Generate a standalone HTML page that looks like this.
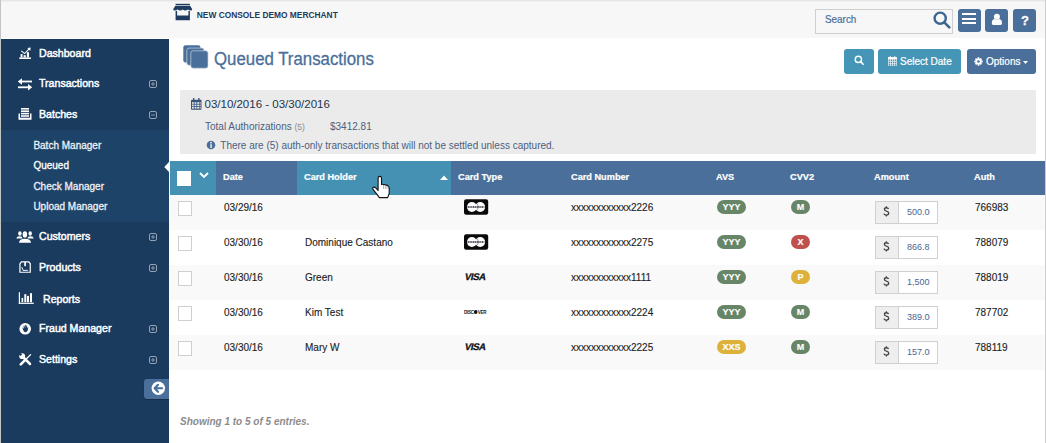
<!DOCTYPE html>
<html><head><meta charset="utf-8">
<style>
*{box-sizing:border-box;margin:0;padding:0}
html,body{width:1046px;height:443px;overflow:hidden;background:#fff;font-family:"Liberation Sans",sans-serif}
.a{position:absolute}
.t{position:absolute;white-space:nowrap;line-height:1}
#hdr{left:0;top:0;width:1046px;height:38px;background:#f7f7f7}
#side{left:1px;top:39px;width:168px;height:404px;background:#1a3a5e}
#sub{left:1px;top:130px;width:168px;height:92px;background:#1e4368}
.nav{color:#fff;font-size:10.6px;-webkit-text-stroke:0.45px #fff}
.subi{color:#eef1f5;font-size:10px;-webkit-text-stroke:0.3px #eef1f5}
.pm{position:absolute;left:149px;width:8px;height:8px}
.pm svg{display:block}
.btn{position:absolute;border-radius:3px}
.th{position:absolute;top:161px;height:34px}
.thl{color:#fff;font-weight:bold;font-size:9.2px;top:172.6px;-webkit-text-stroke:0.2px #fff}
.row{position:absolute;left:169px;width:876px;height:35px}
.cb{position:absolute;left:178px;width:14px;height:15px;background:#fff;border:1px solid #cfcfcf}
.td{color:#222;font-size:10px;-webkit-text-stroke:0.12px #222}
.badge{position:absolute;height:14px;border-radius:7px;color:#fff;font-weight:bold;font-size:9px;text-align:center;line-height:14px;-webkit-text-stroke:0.15px #fff}
.grn{background:#678567}
.red{background:#c0504d}
.yel{background:#deb23a}
.amt{position:absolute;left:875px;width:63px;height:23px}
.amt .ad{position:absolute;left:0;top:0;width:24px;height:23px;background:#eeeeee;border:1px solid #d0d0d0;color:#444;font-size:13px;text-align:center;line-height:21px;-webkit-text-stroke:0.2px #444}
.amt .in{position:absolute;left:23px;top:0;width:40px;height:23px;background:#fff;border:1px solid #d0d0d0;color:#4a6690;font-size:9px;line-height:21px}
.amt .in span{position:absolute;left:8px;top:0;width:23px;overflow:hidden;white-space:nowrap}
</style></head><body>
<!-- borders -->
<div class="a" style="left:0;top:0;width:1046px;height:1px;background:#e4e4e4"></div>
<div class="a" id="hdr"></div>
<div class="a" style="left:0;top:0;width:1046px;height:1px;background:#e6e6e6"></div>
<div class="a" style="left:0;top:1px;width:1046px;height:1px;background:#f0f0f0"></div>

<!-- header logo -->
<svg class="a" style="left:173px;top:3px" width="20" height="18" viewBox="0 0 20 18" fill="#1e3c60">
 <rect x="2.6" y="0.8" width="14.3" height="1.3"/>
 <path d="M2.4 2.8 H17.1 L19.2 6.2 Q19.2 7.5 17.8 7.5 Q16.3 7.5 14.9 6.6 Q13.5 7.5 12.1 7.5 Q10.7 7.5 9.7 6.6 Q8.6 7.5 7.3 7.5 Q5.9 7.5 4.6 6.6 Q3.3 7.5 1.6 7.5 Q0.2 7.5 0.2 6.2 Z"/>
 <path d="M2.6 8 H4.1 V12.4 H15.4 V8 H16.9 V17.3 H2.6 Z"/>
</svg>
<div class="t" style="left:196.8px;top:11px;font-size:8.4px;font-weight:bold;color:#1f3a5c">NEW CONSOLE DEMO MERCHANT</div>

<!-- search -->
<div class="a" style="left:815px;top:9px;width:138px;height:25px;border:1px solid #cfcfcf;background:#f7f7f7"></div>
<div class="t" style="left:825px;top:15.2px;font-size:10.3px;color:#4a6f9a;-webkit-text-stroke:0.2px #4a6f9a;transform:scaleX(0.96);transform-origin:0 0">Search</div>
<svg class="a" style="left:933px;top:11px" width="18" height="18" viewBox="0 0 18 18">
 <circle cx="7.2" cy="7.2" r="5.6" fill="none" stroke="#3d6591" stroke-width="2.4"/>
 <line x1="11.3" y1="11.3" x2="16.3" y2="16.3" stroke="#3d6591" stroke-width="2.6" stroke-linecap="round"/>
</svg>
<div class="btn" style="left:958px;top:9px;width:23px;height:23px;background:#4a6f9a"></div>
<div class="a" style="left:962px;top:13px;width:14px;height:2px;background:#fff"></div>
<div class="a" style="left:962px;top:17.5px;width:14px;height:2px;background:#fff"></div>
<div class="a" style="left:962px;top:22px;width:14px;height:2px;background:#fff"></div>
<div class="btn" style="left:985px;top:9px;width:23px;height:23px;background:#4a6f9a"></div>
<svg class="a" style="left:985px;top:9px" width="23" height="23" viewBox="0 0 23 23">
 <circle cx="11.9" cy="7.7" r="3" fill="#fff"/>
 <path d="M6.8 14.2 Q6.8 10.6 9.5 10 Q11.9 11.4 14.3 10 Q17 10.6 17 14.2 Q17 16 15.6 16 H8.2 Q6.8 16 6.8 14.2 Z" fill="#fff"/>
</svg>
<div class="btn" style="left:1013px;top:9px;width:23px;height:23px;background:#4a6f9a"></div>
<div class="t" style="left:1021px;top:13.5px;font-size:13px;font-weight:bold;color:#fff;-webkit-text-stroke:0.3px #fff">?</div>

<!-- sidebar -->
<div class="a" id="side"></div>
<div class="a" id="sub"></div>
<div class="a" style="left:0;top:0;width:1px;height:443px;background:#c4c4c4"></div>
<div class="a" style="left:1045px;top:0;width:1px;height:443px;background:#cdcdcd"></div>

<!-- nav icons -->
<svg class="a" style="left:19px;top:47px" width="13" height="13" viewBox="0 0 13 13" fill="#fff">
 <rect x="0.3" y="10.4" width="11.6" height="1.6"/>
 <rect x="1.6" y="7" width="1.9" height="3.4"/><rect x="4.6" y="8.2" width="2.2" height="2.2"/><rect x="7.9" y="5.2" width="2.1" height="5.2"/>
 <path d="M2.3 3.8 L5.6 6.6 L10 2.2" stroke="#fff" stroke-width="1.1" fill="none"/>
 <path d="M8.3 0.9 L11.6 0.6 L11.3 3.9 Z"/>
</svg>
<div class="t nav" style="left:39px;top:48px">Dashboard</div>

<svg class="a" style="left:17px;top:78px" width="16" height="13" viewBox="0 0 16 13" fill="#fff">
 <rect x="4" y="2.6" width="11" height="1.8"/><path d="M0.8 3.5 L5 0.3 L5 6.7 Z"/>
 <rect x="1" y="8.4" width="11" height="1.8"/><path d="M15.2 9.3 L11 6.1 L11 12.5 Z"/>
</svg>
<div class="t nav" style="left:39px;top:78px">Transactions</div>
<div class="pm" style="top:80px"><svg width="8" height="8" viewBox="0 0 8 8"><rect x="0.5" y="0.5" width="7" height="7" rx="1.5" fill="none" stroke="#95a3b5" stroke-width="1"/><path d="M2 4 H6" stroke="#95a3b5" stroke-width="0.9"/><path d="M4 2 V6" stroke="#95a3b5" stroke-width="0.9"/></svg></div>

<svg class="a" style="left:18px;top:107px" width="14" height="14" viewBox="0 0 14 14" fill="#fff">
 <rect x="3" y="1" width="8" height="1.6"/><rect x="3" y="3.4" width="8" height="1.6"/><rect x="3" y="5.8" width="8" height="1.6"/><rect x="3" y="8.2" width="8" height="1.6"/>
 <path d="M0.5 6.5 H2 V10.8 H12 V6.5 H13.5 V12.8 H0.5 Z"/>
</svg>
<div class="t nav" style="left:39px;top:109px">Batches</div>
<div class="pm" style="top:111px"><svg width="8" height="8" viewBox="0 0 8 8"><rect x="0.5" y="0.5" width="7" height="7" rx="1.5" fill="none" stroke="#95a3b5" stroke-width="1"/><path d="M2 4 H6" stroke="#95a3b5" stroke-width="0.9"/></svg></div>

<div class="t subi" style="left:33.4px;top:141px">Batch Manager</div>
<div class="t subi" style="left:33.4px;top:161px;color:#fff;-webkit-text-stroke:0.3px #fff">Queued</div>
<div class="t subi" style="left:33.4px;top:181.6px">Check Manager</div>
<div class="t subi" style="left:33.4px;top:201.8px">Upload Manager</div>
<svg class="a" style="left:164px;top:162px" width="5" height="10" viewBox="0 0 5 10"><path d="M5 0 L0.3 5 L5 10 Z" fill="#fff"/></svg>

<svg class="a" style="left:16px;top:230px" width="18" height="13" viewBox="0 0 18 13" fill="#fff">
 <ellipse cx="3.9" cy="3.5" rx="1.7" ry="2.2"/><ellipse cx="14.2" cy="3.5" rx="1.7" ry="2.2"/>
 <path d="M0.3 8.4 Q0.6 6.2 3.5 6.2 Q6.3 6.2 6.6 8.4 Z"/><path d="M11.4 8.4 Q11.7 6.2 14.5 6.2 Q17.4 6.2 17.7 8.4 Z"/>
 <ellipse cx="8.9" cy="4.4" rx="2.2" ry="3.2"/>
 <path d="M3 12.7 Q3.2 8.8 9 8.8 Q14.8 8.8 15 12.7 Z"/>
</svg>
<div class="t nav" style="left:39px;top:231px">Customers</div>
<div class="pm" style="top:233px"><svg width="8" height="8" viewBox="0 0 8 8"><rect x="0.5" y="0.5" width="7" height="7" rx="1.5" fill="none" stroke="#95a3b5" stroke-width="1"/><path d="M2 4 H6" stroke="#95a3b5" stroke-width="0.9"/><path d="M4 2 V6" stroke="#95a3b5" stroke-width="0.9"/></svg></div>

<svg class="a" style="left:19px;top:260.8px" width="12.2" height="12.2" viewBox="0 0 13 13">
 <path d="M1 3 L2.5 1 H10.5 L12 3 V12 H1 Z" fill="none" stroke="#fff" stroke-width="1.3"/>
 <rect x="5.6" y="1" width="1.8" height="4.5" fill="#fff"/>
 <path d="M3 6.5 L4.3 10 H9.5" fill="none" stroke="#fff" stroke-width="1"/>
</svg>
<div class="t nav" style="left:39px;top:262px">Products</div>
<div class="pm" style="top:264px"><svg width="8" height="8" viewBox="0 0 8 8"><rect x="0.5" y="0.5" width="7" height="7" rx="1.5" fill="none" stroke="#95a3b5" stroke-width="1"/><path d="M2 4 H6" stroke="#95a3b5" stroke-width="0.9"/><path d="M4 2 V6" stroke="#95a3b5" stroke-width="0.9"/></svg></div>

<svg class="a" style="left:18px;top:292px" width="16" height="13" viewBox="0 0 16 13" fill="#fff">
 <rect x="0.8" y="0.2" width="1.2" height="11.7"/><rect x="0.8" y="10.7" width="15" height="1.2"/>
 <rect x="3.5" y="5.9" width="1.7" height="4.3"/><rect x="6.3" y="2.2" width="2" height="8"/><rect x="9" y="3.9" width="2" height="6.3"/><rect x="12" y="1.2" width="2" height="9"/>
</svg>
<div class="t nav" style="left:43px;top:294px">Reports</div>

<svg class="a" style="left:19px;top:322px" width="13" height="13" viewBox="0 0 13 13">
 <circle cx="6.2" cy="6.8" r="5.8" fill="#fff"/>
 <path d="M3.6 6.6 Q3.4 5.4 4 5.6 L4.8 7 L4.6 3.8 Q4.9 3.3 5.3 3.8 L5.8 6 L5.9 3 Q6.3 2.6 6.7 3 L6.9 6 L7.4 3.4 Q7.8 3 8.2 3.5 L8.1 6.4 L8.8 5.2 Q9.3 5 9.4 5.6 L8.6 8.8 Q7.9 10.2 6.3 10.2 Q4.6 10.2 3.6 6.6 Z" fill="#1a3a5c"/>
</svg>
<div class="t nav" style="left:39px;top:323px">Fraud Manager</div>
<div class="pm" style="top:325px"><svg width="8" height="8" viewBox="0 0 8 8"><rect x="0.5" y="0.5" width="7" height="7" rx="1.5" fill="none" stroke="#95a3b5" stroke-width="1"/><path d="M2 4 H6" stroke="#95a3b5" stroke-width="0.9"/><path d="M4 2 V6" stroke="#95a3b5" stroke-width="0.9"/></svg></div>

<svg class="a" style="left:19px;top:353px" width="13" height="13" viewBox="0 0 13 13">
 <line x1="11.6" y1="1.6" x2="6" y2="7.2" stroke="#fff" stroke-width="1.3" stroke-linecap="round"/>
 <line x1="6" y1="7.2" x2="1.8" y2="11.4" stroke="#fff" stroke-width="2.6" stroke-linecap="round"/>
 <line x1="4" y1="4" x2="11" y2="11" stroke="#fff" stroke-width="2.5" stroke-linecap="round"/>
 <circle cx="3.2" cy="3.2" r="2.9" fill="#fff"/>
 <path d="M1.6 0 L3.1 1.5 L1.5 3.1 L0 1.6 Z" fill="#1a3a5c"/>
</svg>
<div class="t nav" style="left:39px;top:354px">Settings</div>
<div class="pm" style="top:356px"><svg width="8" height="8" viewBox="0 0 8 8"><rect x="0.5" y="0.5" width="7" height="7" rx="1.5" fill="none" stroke="#95a3b5" stroke-width="1"/><path d="M2 4 H6" stroke="#95a3b5" stroke-width="0.9"/><path d="M4 2 V6" stroke="#95a3b5" stroke-width="0.9"/></svg></div>

<!-- collapse btn -->
<div class="a" style="left:144px;top:379px;width:25px;height:20px;background:#4a6f9a;border-radius:3px 0 0 3px;box-shadow:0 1px 1px rgba(0,0,0,.25)"></div>
<svg class="a" style="left:150.5px;top:381px" width="15" height="15" viewBox="0 0 15 15">
 <circle cx="7.3" cy="7.3" r="6.7" fill="#fff"/>
 <path d="M7 3.8 L3.6 7.3 L7 10.8 M3.9 7.3 H11.2" stroke="#4a6f9a" stroke-width="2.1" fill="none" stroke-linecap="round" stroke-linejoin="round"/>
</svg>

<!-- title -->
<svg class="a" style="left:182.7px;top:44.7px" width="26" height="24" viewBox="0 0 26 24">
 <rect x="0.3" y="0.3" width="17.2" height="17.2" rx="2.3" fill="#4a6f9a"/>
 <rect x="3.8" y="3.1" width="17.2" height="17.2" rx="2.3" fill="#4a6f9a" stroke="#c9d4e0" stroke-width="0.7"/>
 <rect x="7.8" y="5.8" width="17.2" height="17.4" rx="2.3" fill="#4a6f9a" stroke="#c9d4e0" stroke-width="0.7"/>
</svg>
<div class="t" style="left:214px;top:50px;font-size:18.3px;color:#4a6f9a;-webkit-text-stroke:0.3px #4a6f9a;transform:scaleX(0.92);transform-origin:0 0">Queued Transactions</div>

<!-- action buttons -->
<div class="btn" style="left:844px;top:49px;width:30px;height:24.5px;background:#4595b6"></div>
<svg class="a" style="left:853.5px;top:55px" width="10.5" height="10.5" viewBox="0 0 12 12">
 <circle cx="5" cy="5" r="3.6" fill="none" stroke="#fff" stroke-width="1.6"/>
 <line x1="7.6" y1="7.6" x2="10.5" y2="10.5" stroke="#fff" stroke-width="1.8" stroke-linecap="round"/>
</svg>
<div class="btn" style="left:878px;top:49px;width:83px;height:24.5px;background:#4595b6"></div>
<svg class="a" style="left:888px;top:55.5px" width="9" height="10.5" viewBox="0 0 9 10.5" fill="none" stroke="#fff" stroke-width="0.65">
 <rect x="0.4" y="1.6" width="8.2" height="8.5" rx="0.4"/>
 <rect x="0.4" y="1.6" width="8.2" height="1.5" fill="#fff"/>
 <path d="M2.45 3 V10 M4.5 3 V10 M6.55 3 V10 M0.5 5.4 H8.5 M0.5 7.7 H8.5"/>
 <path d="M2.3 0.2 V2 M6.7 0.2 V2" stroke-width="1"/>
</svg>
<div class="t" style="left:900px;top:56.6px;font-size:10px;color:#fff;-webkit-text-stroke:0.2px #fff">Select Date</div>
<div class="btn" style="left:967px;top:49px;width:69px;height:24.5px;background:#4a6f9a"></div>
<svg class="a" style="left:974.2px;top:56.8px" width="9" height="9" viewBox="0 0 10 10">
 <circle cx="5" cy="5" r="3.4" fill="#fff"/>
 <g stroke="#fff" stroke-width="2"><line x1="5" y1="0.3" x2="5" y2="9.7"/><line x1="0.3" y1="5" x2="9.7" y2="5"/><line x1="1.7" y1="1.7" x2="8.3" y2="8.3"/><line x1="8.3" y1="1.7" x2="1.7" y2="8.3"/></g>
 <circle cx="5" cy="5" r="1.4" fill="#4a6f9a"/>
</svg>
<div class="t" style="left:986px;top:57px;font-size:10px;color:#fff;-webkit-text-stroke:0.2px #fff">Options</div>
<svg class="a" style="left:1023px;top:61px" width="5" height="3" viewBox="0 0 5 3"><path d="M0 0 H5 L2.5 3 Z" fill="#fff"/></svg>

<!-- summary panel -->
<div class="a" style="left:180px;top:90px;width:856px;height:64px;background:#ebebeb"></div>
<svg class="a" style="left:191px;top:98px" width="11" height="12" viewBox="0 0 11 12" fill="#3a5478">
 <rect x="0" y="1.8" width="10.5" height="10" rx="0.8"/>
 <g fill="#ebebeb"><rect x="1" y="4.2" width="1.8" height="1.6"/><rect x="3.6" y="4.2" width="1.8" height="1.6"/><rect x="6.2" y="4.2" width="1.8" height="1.6"/><rect x="1" y="6.6" width="1.8" height="1.6"/><rect x="3.6" y="6.6" width="1.8" height="1.6"/><rect x="6.2" y="6.6" width="1.8" height="1.6"/><rect x="1" y="9" width="1.8" height="1.6"/><rect x="3.6" y="9" width="1.8" height="1.6"/><rect x="6.2" y="9" width="1.8" height="1.6"/><rect x="8.6" y="4.2" width="1" height="1.6"/><rect x="8.6" y="6.6" width="1" height="1.6"/><rect x="8.6" y="9" width="1" height="1.6"/></g>
 <rect x="2" y="0" width="1.3" height="3"/><rect x="7.2" y="0" width="1.3" height="3"/>
</svg>
<div class="t" style="left:204.5px;top:98.8px;font-size:11.5px;color:#24344c">03/10/2016 - 03/30/2016</div>
<div class="t" style="left:205px;top:122px;font-size:10px;color:#4c5f80">Total Authorizations <span style="font-size:8.5px;color:#8a8a8a">(5)</span></div>
<div class="t" style="left:330px;top:122px;font-size:10px;color:#4c5f80">$3412.81</div>
<svg class="a" style="left:206px;top:140px" width="10" height="10" viewBox="0 0 10 10">
 <circle cx="5" cy="5" r="4.3" fill="#4a6f9a"/>
 <rect x="4.3" y="4.2" width="1.5" height="3.8" fill="#ebebeb"/><circle cx="5" cy="2.7" r="0.9" fill="#ebebeb"/>
</svg>
<div class="t" style="left:220.3px;top:141px;font-size:10px;color:#4c5f80">There are (5) auth-only transactions that will not be settled unless captured.</div>

<!-- table header -->
<div class="th" style="left:170px;width:46px;background:#4591b4"></div>
<div class="th" style="left:216px;width:81px;background:#4a6f9a"></div>
<div class="th" style="left:297px;width:154px;background:#4591b4"></div>
<div class="th" style="left:451px;width:594px;background:#4a6f9a"></div>
<div class="a" style="left:177px;top:171px;width:14px;height:15px;background:#fff"></div>
<svg class="a" style="left:199px;top:172px" width="10" height="7" viewBox="0 0 10 7"><path d="M1 1 L5 5 L9 1" stroke="#fff" stroke-width="1.8" fill="none"/></svg>
<div class="t thl" style="left:223px">Date</div>
<div class="t thl" style="left:304px">Card Holder</div>
<svg class="a" style="left:440px;top:175px" width="8" height="5" viewBox="0 0 8 5"><path d="M0 5 L4 0.5 L8 5 Z" fill="#fff"/></svg>
<div class="t thl" style="left:458px">Card Type</div>
<div class="t thl" style="left:571px">Card Number</div>
<div class="t thl" style="left:716px">AVS</div>
<div class="t thl" style="left:790px">CVV2</div>
<div class="t thl" style="left:874px">Amount</div>
<div class="t thl" style="left:974px">Auth</div>

<!-- rows -->
<div class="row" style="top:195px;background:#f9f9f9"></div>
<div class="row" style="top:230px;background:#fff"></div>
<div class="row" style="top:265px;background:#f9f9f9"></div>
<div class="row" style="top:300px;background:#fff"></div>
<div class="row" style="top:335px;background:#f9f9f9"></div>

<div id="rows">
<div class="cb" style="top:201px"></div>
<div class="t td" style="left:224px;top:203px">03/29/16</div>
<svg class="a" style="left:464px;top:199px" width="25" height="16" viewBox="0 0 25 16"><rect x="0" y="0.2" width="24.2" height="15.5" rx="2.2" fill="#0a0a0a"/><circle cx="7.9" cy="8" r="4.9" fill="#fff"/><circle cx="16.2" cy="8" r="4.9" fill="#fff"/><path d="M11.6 3.6 A4.9 4.9 0 0 1 11.6 12.4" fill="none" stroke="#333" stroke-width="0.5"/><path d="M3.6 8 H20.4" stroke="#2a2a3a" stroke-width="1.6" stroke-dasharray="1.3 0.5"/></svg>
<div class="t td" style="left:571px;top:203px">xxxxxxxxxxxx2226</div>
<div class="badge grn" style="left:717px;top:200px;width:29px">YYY</div>
<div class="badge grn" style="left:791px;top:200px;width:19px">M</div>
<div class="amt" style="top:201px"><div class="ad"><svg style="position:absolute;left:7.3px;top:4px" width="7" height="11" viewBox="0 0 7 11"><path d="M5.6 3.1 Q5 1.7 3.4 1.7 Q1.4 1.7 1.4 3.3 Q1.4 4.6 3.4 5.1 Q5.7 5.6 5.7 7.3 Q5.7 9.1 3.4 9.1 Q1.4 9.1 0.9 7.6" fill="none" stroke="#444" stroke-width="1.35"/><path d="M3.4 0.3 V1.7 M3.4 9.1 V10.6" stroke="#444" stroke-width="1.2"/></svg></div><div class="in"><span>500.00</span></div></div>
<div class="t td" style="left:975px;top:203px">766983</div>
<div class="cb" style="top:236px"></div>
<div class="t td" style="left:224px;top:238px">03/30/16</div>
<div class="t td" style="left:305px;top:238px">Dominique Castano</div>
<svg class="a" style="left:464px;top:234px" width="25" height="16" viewBox="0 0 25 16"><rect x="0" y="0.2" width="24.2" height="15.5" rx="2.2" fill="#0a0a0a"/><circle cx="7.9" cy="8" r="4.9" fill="#fff"/><circle cx="16.2" cy="8" r="4.9" fill="#fff"/><path d="M11.6 3.6 A4.9 4.9 0 0 1 11.6 12.4" fill="none" stroke="#333" stroke-width="0.5"/><path d="M3.6 8 H20.4" stroke="#2a2a3a" stroke-width="1.6" stroke-dasharray="1.3 0.5"/></svg>
<div class="t td" style="left:571px;top:238px">xxxxxxxxxxxx2275</div>
<div class="badge grn" style="left:717px;top:235px;width:29px">YYY</div>
<div class="badge red" style="left:791px;top:235px;width:19px">X</div>
<div class="amt" style="top:236px"><div class="ad"><svg style="position:absolute;left:7.3px;top:4px" width="7" height="11" viewBox="0 0 7 11"><path d="M5.6 3.1 Q5 1.7 3.4 1.7 Q1.4 1.7 1.4 3.3 Q1.4 4.6 3.4 5.1 Q5.7 5.6 5.7 7.3 Q5.7 9.1 3.4 9.1 Q1.4 9.1 0.9 7.6" fill="none" stroke="#444" stroke-width="1.35"/><path d="M3.4 0.3 V1.7 M3.4 9.1 V10.6" stroke="#444" stroke-width="1.2"/></svg></div><div class="in"><span>866.81</span></div></div>
<div class="t td" style="left:975px;top:238px">788079</div>
<div class="cb" style="top:271px"></div>
<div class="t td" style="left:224px;top:273px">03/30/16</div>
<div class="t td" style="left:305px;top:273px">Green</div>
<div class="t" style="left:464px;top:271.5px;font-size:9.6px;font-weight:bold;color:#111;letter-spacing:-0.4px;-webkit-text-stroke:0.3px #111;transform:skewX(-12deg);transform-origin:0 100%">VISA</div>
<div class="t td" style="left:571px;top:273px">xxxxxxxxxxxx1111</div>
<div class="badge grn" style="left:717px;top:270px;width:29px">YYY</div>
<div class="badge yel" style="left:791px;top:270px;width:19px">P</div>
<div class="amt" style="top:271px"><div class="ad"><svg style="position:absolute;left:7.3px;top:4px" width="7" height="11" viewBox="0 0 7 11"><path d="M5.6 3.1 Q5 1.7 3.4 1.7 Q1.4 1.7 1.4 3.3 Q1.4 4.6 3.4 5.1 Q5.7 5.6 5.7 7.3 Q5.7 9.1 3.4 9.1 Q1.4 9.1 0.9 7.6" fill="none" stroke="#444" stroke-width="1.35"/><path d="M3.4 0.3 V1.7 M3.4 9.1 V10.6" stroke="#444" stroke-width="1.2"/></svg></div><div class="in"><span>1,500.00</span></div></div>
<div class="t td" style="left:975px;top:273px">788019</div>
<div class="cb" style="top:306px"></div>
<div class="t td" style="left:224px;top:308px">03/30/16</div>
<div class="t td" style="left:305px;top:308px">Kim Test</div>
<div class="t" style="left:464px;top:310px;font-size:5px;font-weight:bold;color:#222;letter-spacing:-0.25px;transform:scaleX(0.9);transform-origin:0 0">DISC<span style="display:inline-block;width:3.6px;height:3.6px;border-radius:2px;background:#111;vertical-align:0px;margin:0 0.3px"></span>VER</div>
<div class="t td" style="left:571px;top:308px">xxxxxxxxxxxx2224</div>
<div class="badge grn" style="left:717px;top:305px;width:29px">YYY</div>
<div class="badge grn" style="left:791px;top:305px;width:19px">M</div>
<div class="amt" style="top:306px"><div class="ad"><svg style="position:absolute;left:7.3px;top:4px" width="7" height="11" viewBox="0 0 7 11"><path d="M5.6 3.1 Q5 1.7 3.4 1.7 Q1.4 1.7 1.4 3.3 Q1.4 4.6 3.4 5.1 Q5.7 5.6 5.7 7.3 Q5.7 9.1 3.4 9.1 Q1.4 9.1 0.9 7.6" fill="none" stroke="#444" stroke-width="1.35"/><path d="M3.4 0.3 V1.7 M3.4 9.1 V10.6" stroke="#444" stroke-width="1.2"/></svg></div><div class="in"><span>389.00</span></div></div>
<div class="t td" style="left:975px;top:308px">787702</div>
<div class="cb" style="top:341px"></div>
<div class="t td" style="left:224px;top:343px">03/30/16</div>
<div class="t td" style="left:305px;top:343px">Mary W</div>
<div class="t" style="left:464px;top:341.5px;font-size:9.6px;font-weight:bold;color:#111;letter-spacing:-0.4px;-webkit-text-stroke:0.3px #111;transform:skewX(-12deg);transform-origin:0 100%">VISA</div>
<div class="t td" style="left:571px;top:343px">xxxxxxxxxxxx2225</div>
<div class="badge yel" style="left:717px;top:340px;width:29px">XXS</div>
<div class="badge grn" style="left:791px;top:340px;width:19px">M</div>
<div class="amt" style="top:341px"><div class="ad"><svg style="position:absolute;left:7.3px;top:4px" width="7" height="11" viewBox="0 0 7 11"><path d="M5.6 3.1 Q5 1.7 3.4 1.7 Q1.4 1.7 1.4 3.3 Q1.4 4.6 3.4 5.1 Q5.7 5.6 5.7 7.3 Q5.7 9.1 3.4 9.1 Q1.4 9.1 0.9 7.6" fill="none" stroke="#444" stroke-width="1.35"/><path d="M3.4 0.3 V1.7 M3.4 9.1 V10.6" stroke="#444" stroke-width="1.2"/></svg></div><div class="in"><span>157.00</span></div></div>
<div class="t td" style="left:975px;top:343px">788119</div>
</div><!--endrows-->

<div class="t" style="left:180px;top:417px;font-size:10px;font-weight:bold;font-style:italic;color:#8c8c8c">Showing 1 to 5 of 5 entries.</div>
<svg class="a" style="left:366px;top:172px" width="30" height="30" viewBox="0 0 30 30">
 <path d="M12.1 6 Q12.1 4.4 13.8 4.4 Q15.5 4.4 15.5 6 L15.5 12.6 Q16.6 11.9 17.7 12.6 Q19 12.2 19.9 13.2 Q21.2 12.9 22.2 14.1 Q23.2 14.7 23.2 16.4 L23.2 21 Q23 23 21.7 25.6 L13.4 25.6 Q11.2 22.7 9.2 20.2 L6.9 17.2 Q6.3 15.9 7.3 15.3 Q8.5 14.7 9.7 15.9 L12.1 18.4 Z" fill="#fff" stroke="#111" stroke-width="1.1" stroke-linejoin="round"/>
 <path d="M17.7 12.6 V17 M19.9 13.2 V17 M22.2 14.1 V17" stroke="#555" stroke-width="0.5"/>
</svg>
</body></html>
